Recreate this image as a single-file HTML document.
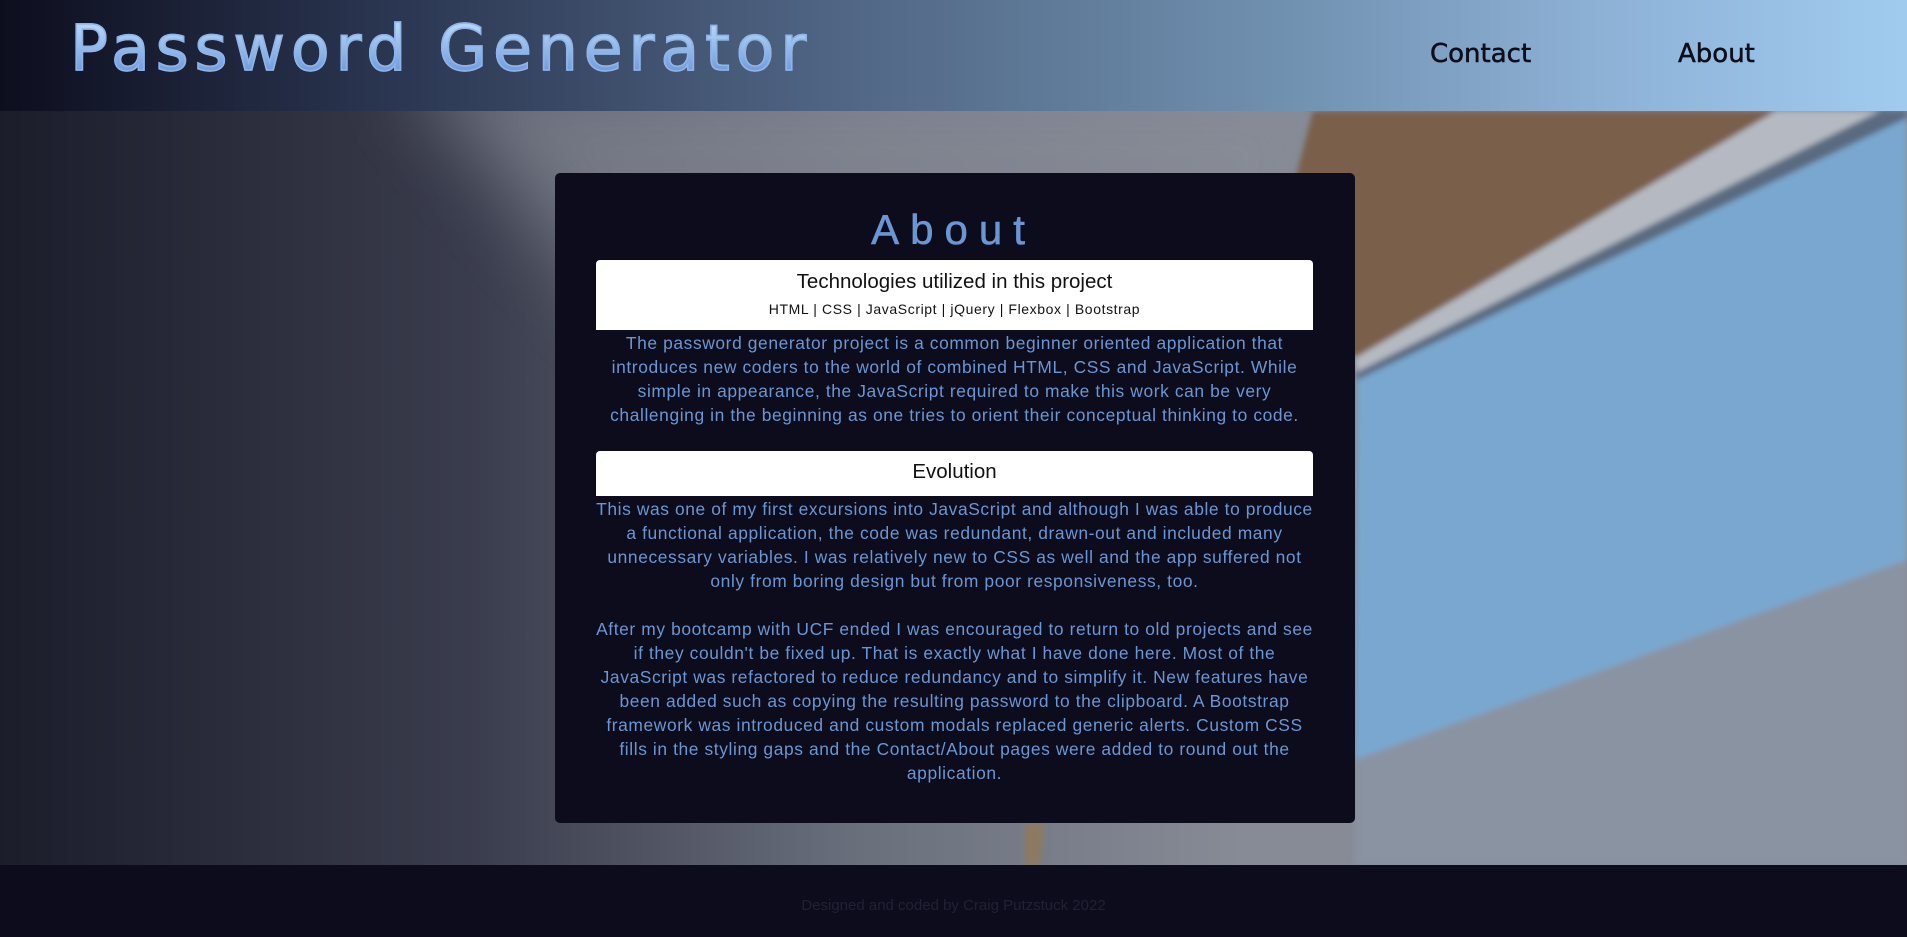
<!DOCTYPE html>
<html><head><meta charset="utf-8"><style>
*{margin:0;padding:0;box-sizing:border-box}
body{width:1907px;height:937px;overflow:hidden;position:relative;font-family:"Liberation Sans",sans-serif;background:#1d1e2c}
#bg{position:absolute;left:0;top:0}
header{position:absolute;left:0;top:0;width:1907px;height:111px;background:linear-gradient(90deg,#0d0e1e 0%,#2a3550 20%,#4a5e7c 40%,#6d8cab 65%,#8fb3d8 85%,#a0cbef 100%)}
.title{position:absolute;left:70px;top:12px;font-family:"DejaVu Sans",sans-serif;font-size:63px;letter-spacing:6px;background:linear-gradient(180deg,#b4d4f6 20%,#6d98dc 85%);-webkit-background-clip:text;background-clip:text;color:transparent;white-space:nowrap;-webkit-text-stroke:1.5px #8fb5e8}
nav a{position:absolute;top:39px;font-family:"DejaVu Sans",sans-serif;font-size:26px;color:#0d0e1a;text-decoration:none;-webkit-text-stroke:.5px #0d0e1a}
.card{position:absolute;left:555px;top:173px;width:800px;height:650px;background:#0c0c1c;border-radius:5px}
h1{position:absolute;left:0;right:0;top:206px;font-size:42px;font-weight:normal;letter-spacing:11px;color:#6a97d4;text-align:center;font-family:"Liberation Sans",sans-serif;-webkit-text-stroke:.6px #6a97d4}
.box{position:absolute;left:596px;width:717px;background:#fff;border-radius:4px 4px 0 0;text-align:center;color:#111}
p{position:absolute;left:596px;width:717px;text-align:center;font-size:17.4px;letter-spacing:.6px;line-height:24px;color:#6a97d4}
footer{position:absolute;left:0;top:865px;width:1907px;height:72px;background:#0c0c1c;text-align:center;color:#202136;font-size:15px;padding-top:32px}
</style></head><body>
<svg id="bg" width="1907" height="937">
<defs><linearGradient id="g" x1="0" x2="1"><stop offset="0" stop-color="#1c1d2b"/><stop offset=".25" stop-color="#3a3d4d"/><stop offset=".45" stop-color="#6a6f7c"/><stop offset=".65" stop-color="#868b96"/></linearGradient>
<filter id="b"><feGaussianBlur stdDeviation="40"/></filter><filter id="s"><feGaussianBlur stdDeviation="3"/></filter></defs>
<rect width="1907" height="937" fill="url(#g)"/>
<polygon points="400,60 1350,60 1300,400 700,400" fill="#868b96" opacity=".7" filter="url(#b)"/>
<g filter="url(#s)">
<polygon points="1313,111 1776,111 1355,360 1290,200" fill="#7a5e4c"/>
<polygon points="1776,111 1880,111 1357,372 1355,358" fill="#b5bac2"/>
<polygon points="1880,111 1907,111 1907,560 1355,760 1357,372" fill="#7aa7cf"/>
<polygon points="1880,111 1907,111 1907,118 1357,380 1357,372" fill="#5a6b80"/>
<polygon points="1907,560 1907,865 1355,865 1355,760" fill="#8a93a2"/>
<polygon points="1025,823 1045,823 1040,865 1025,865" fill="#8c7a60"/>
</g>
</svg>
<header><div class="title">Password Generator</div>
<nav><a style="left:1430px">Contact</a><a style="left:1678px">About</a></nav></header>
<div class="card"></div>
<h1>About</h1>
<div class="box" style="top:260px;height:70px"><div style="font-size:20.5px;padding-top:10px">Technologies utilized in this project</div><div style="font-size:14px;letter-spacing:.6px;padding-top:7px">HTML | CSS | JavaScript | jQuery | Flexbox | Bootstrap</div></div>
<p style="top:331px">The password generator project is a common beginner oriented application that introduces new coders to the world of combined HTML, CSS and JavaScript. While simple in appearance, the JavaScript required to make this work can be very challenging in the beginning as one tries to orient their conceptual thinking to code.</p>
<div class="box" style="top:451px;height:45px"><div style="font-size:20.5px;padding-top:9px">Evolution</div></div>
<p style="top:497px">This was one of my first excursions into JavaScript and although I was able to produce a functional application, the code was redundant, drawn-out and included many unnecessary variables. I was relatively new to CSS as well and the app suffered not only from boring design but from poor responsiveness, too.<br><br>After my bootcamp with UCF ended I was encouraged to return to old projects and see if they couldn't be fixed up. That is exactly what I have done here. Most of the JavaScript was refactored to reduce redundancy and to simplify it. New features have been added such as copying the resulting password to the clipboard. A Bootstrap framework was introduced and custom modals replaced generic alerts. Custom CSS fills in the styling gaps and the Contact/About pages were added to round out the application.</p>
<footer>Designed and coded by Craig Putzstuck 2022</footer>
</body></html>
